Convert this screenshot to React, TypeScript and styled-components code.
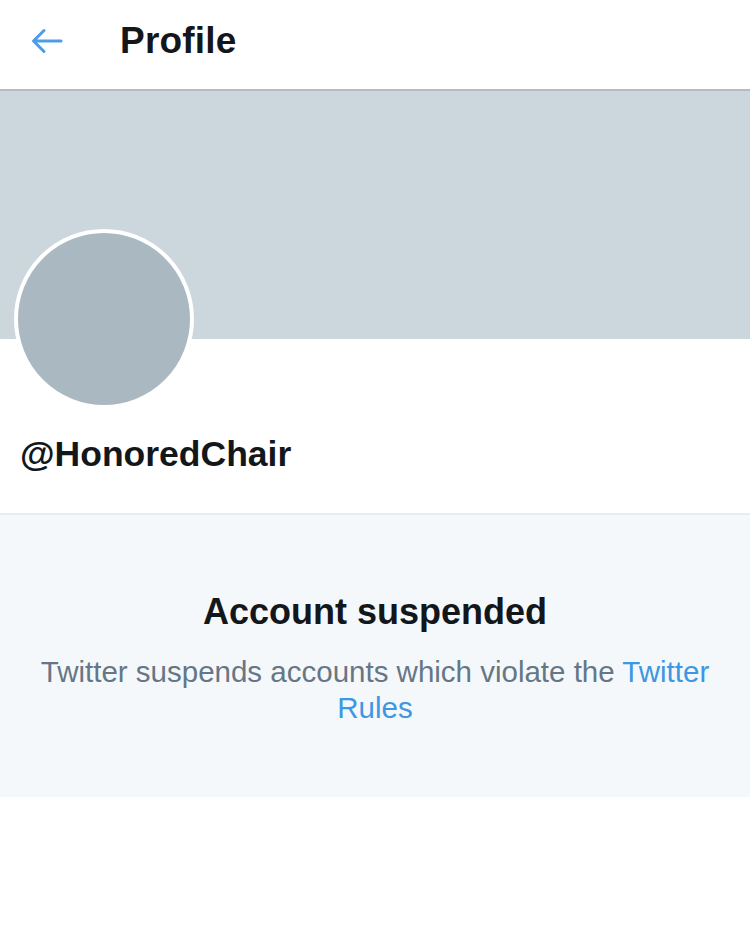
import styled, { createGlobalStyle } from "styled-components"

const GlobalStyle = createGlobalStyle`
  html, body {
    margin: 0;
    padding: 0;
    background: #ffffff;
    font-family: "Liberation Sans", Arial, sans-serif;
  }
`

const Page = styled.div`
  width: 750px;
  min-height: 932px;
  background: #ffffff;
`

const Header = styled.header`
  height: 81px;
  padding-bottom: 8px;
  display: flex;
  align-items: center;
  border-bottom: 2px solid #b7bbbf;
  box-sizing: content-box;
`

const BackButton = styled.button`
  width: 120px;
  height: 81px;
  padding: 0 0 0 31px;
  border: none;
  background: none;
  display: flex;
  align-items: center;
  cursor: pointer;
`

const Title = styled.h1`
  margin: 0;
  font-size: 37px;
  font-weight: 700;
  color: #14171a;
  letter-spacing: 0.2px;
`

const Banner = styled.div`
  height: 248px;
  background: #ccd6dd;
`

const Avatar = styled.div`
  width: 172px;
  height: 172px;
  margin: -110px 0 0 14px;
  border: 4px solid #ffffff;
  border-radius: 50%;
  background: #aab8c2;
`

const Handle = styled.h2`
  margin: 24px 0 0 20px;
  padding-bottom: 38px;
  font-size: 35.5px;
  line-height: 42px;
  font-weight: 700;
  color: #14171a;
`

const Notice = styled.section`
  border-top: 2px solid #e6ecf0;
  background: #f5f8fa;
  padding: 76px 30px 71px;
  text-align: center;
`

const NoticeTitle = styled.h3`
  margin: 0;
  font-size: 36px;
  line-height: 42px;
  font-weight: 700;
  color: #14171a;
`

const NoticeText = styled.p`
  margin: 21px 0 0;
  font-size: 29.5px;
  line-height: 36px;
  color: #657786;
`

const Link = styled.a`
  color: #3d97e3;
  text-decoration: none;
`

export default function App() {
  return (
    <Page>
      <GlobalStyle />
      <Header>
        <BackButton aria-label="Back">
          <svg width="32" height="26" viewBox="0 0 32 26" fill="none">
            <path
              d="M30 13H3M13 2.5L2.5 13L13 23.5"
              stroke="#4a9de6"
              strokeWidth="3"
              strokeLinecap="round"
              strokeLinejoin="round"
            />
          </svg>
        </BackButton>
        <Title>Profile</Title>
      </Header>
      <Banner />
      <Avatar />
      <Handle>@HonoredChair</Handle>
      <Notice>
        <NoticeTitle>Account suspended</NoticeTitle>
        <NoticeText>
          Twitter suspends accounts which violate the <Link href="#">Twitter Rules</Link>
        </NoticeText>
      </Notice>
    </Page>
  )
}
